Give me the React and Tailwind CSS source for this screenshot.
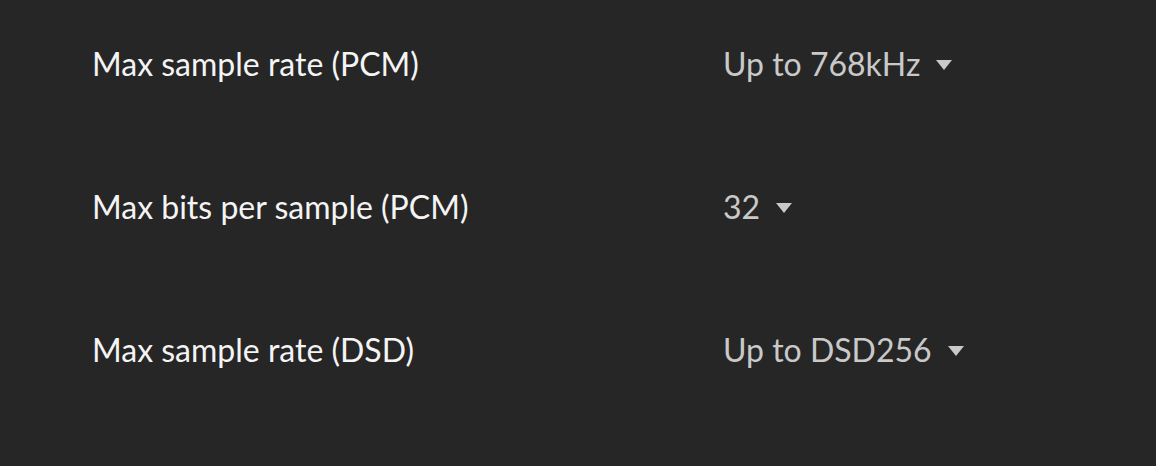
export default function App() {
  const rows = [
    { label: 'Max sample rate (PCM)', value: 'Up to 768kHz' },
    { label: 'Max bits per sample (PCM)', value: '32' },
    { label: 'Max sample rate (DSD)', value: 'Up to DSD256' },
  ];

  return (
    <div className="w-[1156px] h-[466px] bg-[#262626] pl-[92px] pt-[43px] font-['Lato',sans-serif]">
      {rows.map((row) => (
        <div key={row.label} className="flex items-start h-[143px]">
          <div className="w-[631px] text-[32px] text-[#f4f4f4] leading-[42px]">{row.label}</div>
          <button className="flex items-center gap-[16px] text-[32px] text-[#c9c9c9] leading-[42px]">
            {row.value}
            <svg width="16" height="10" viewBox="0 0 16 10" className="mt-[2px]">
              <path d="M0 0 H16 L8 10 Z" fill="#c9c9c9" />
            </svg>
          </button>
        </div>
      ))}
    </div>
  );
}
